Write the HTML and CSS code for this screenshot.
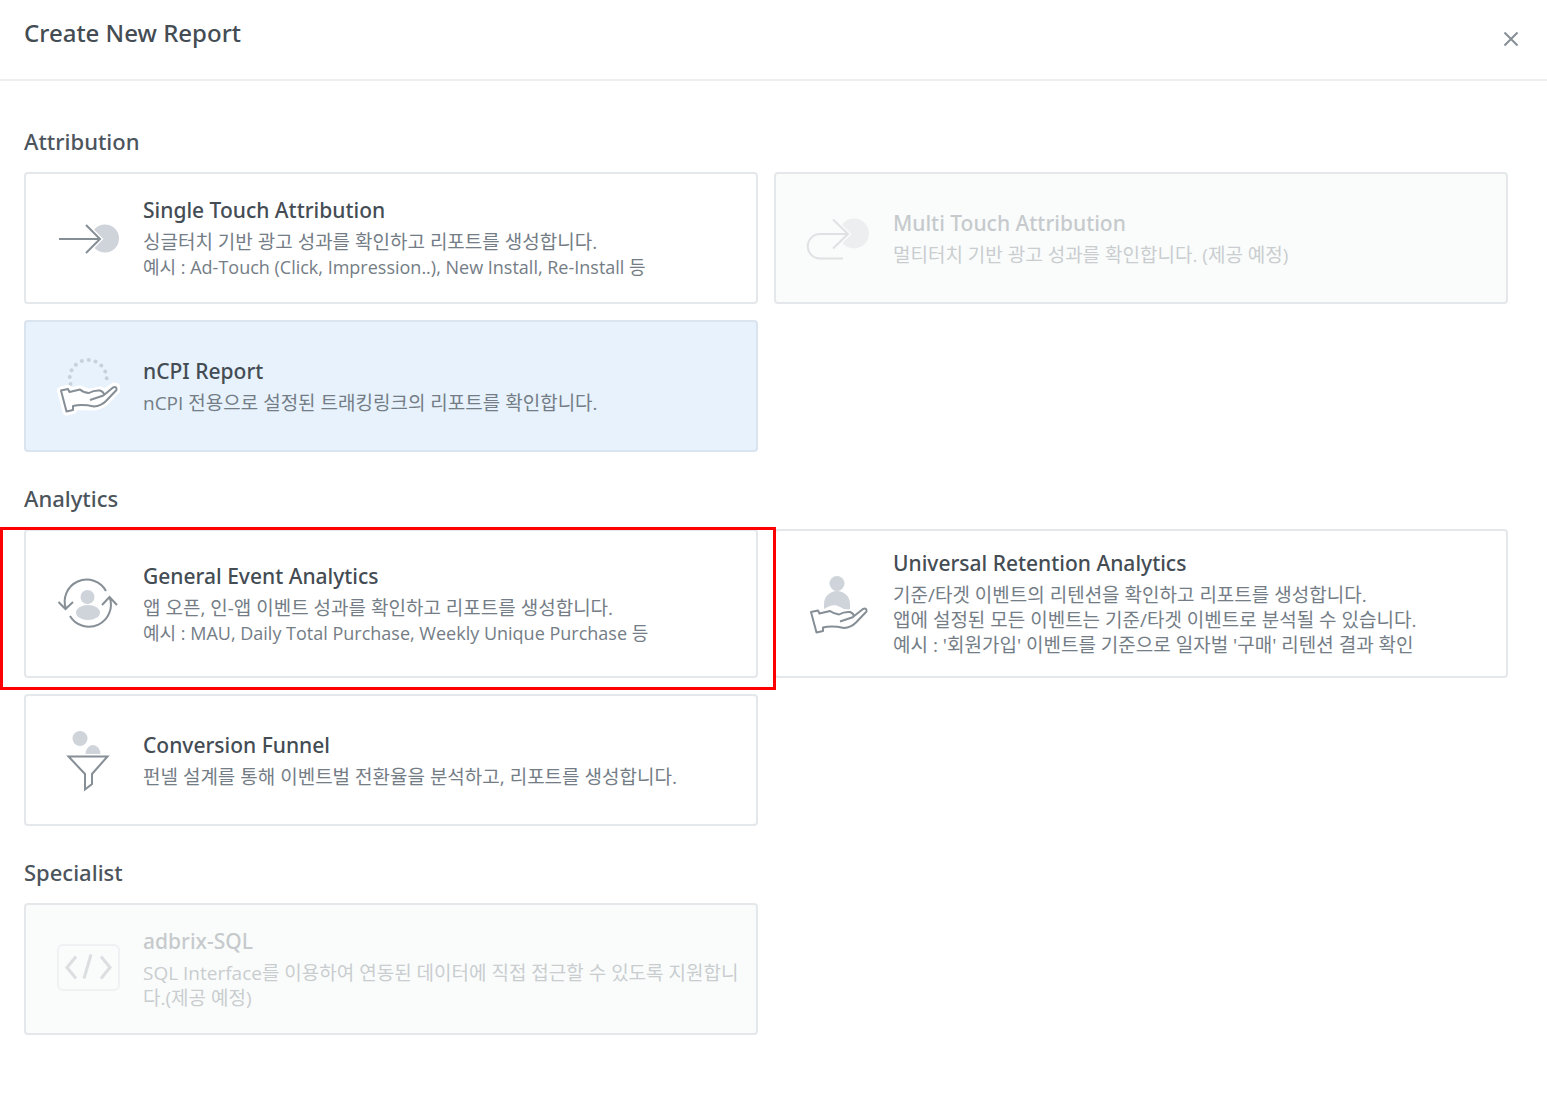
FILE: index.html
```html
<!DOCTYPE html>
<html lang="ko">
<head>
<meta charset="utf-8">
<meta name="viewport" content="width=device-width, initial-scale=1">
<title>Create New Report</title>
<link rel="stylesheet" href="styles.css">
</head>
<body>
<header class="header">
  <h1 class="header-title">Create New Report</h1>
  <button class="close" type="button" aria-label="Close">
    <svg width="16" height="16" viewBox="0 0 16 16"><path d="M1.500 1.500L14.500 14.500M14.500 1.500L1.500 14.500"/></svg>
  </button>
</header>
<main class="content">
  <section class="section">
    <h2 class="section-title">Attribution</h2>
    <div class="grid">
      <button class="card" type="button">
        <svg class="icon" viewBox="0 0 64 64"><circle class="fill" cx="49" cy="32.500" r="14"/><path class="gap" d="M32 19L46 33L32 47Z"/><path class="line" d="M3 33H43M30 19L44 33L30 47"/></svg>
        <span class="text"><span class="title">Single Touch Attribution</span><span class="desc">싱글터치 기반 광고 성과를 확인하고 리포트를 생성합니다.</span><span class="desc example">예시 : Ad-Touch (Click, Impression..), New Install, Re-Install 등</span></span>
      </button>
      <button class="card" type="button" disabled>
        <svg class="icon" viewBox="0 0 64 64"><circle class="fill" cx="48" cy="27.500" r="15"/><path class="gap" d="M29 13L44 28L29 43Z"/><path class="line" d="M41 28H14a12 12 0 0 0 0 24.500H37M27 13.500L42 28L27 42.500"/></svg>
        <span class="text"><span class="title">Multi Touch Attribution</span><span class="desc">멀티터치 기반 광고 성과를 확인합니다. (제공 예정)</span></span>
      </button>
      <button class="card selected" type="button">
        <svg class="icon" viewBox="0 0 64 64"><path class="dots" d="M14.500 30A18.500 18.500 0 1 1 49.500 31"/><path class="halo" d="M5 36.500L12 35L13.500 38L24 35.500L33 39L44 36.500L48 39L58 32.500Q61 32 60.500 35.500L50 47Q45 52 38 52.500L17 52V56L10.500 57.500Z"/><path class="hand" d="M5 36.500L12 35L13.500 38L24 35.500Q28 39 33 39Q38 36 44 36.500Q48 38 48 41L57 33.500Q61 32 60.500 36L50 47Q45 52 38 52.500Q26 50 17 52V56L10.500 57.500ZM47.500 41.500L34 46"/></svg>
        <span class="text"><span class="title">nCPI Report</span><span class="desc">nCPI 전용으로 설정된 트래킹링크의 리포트를 확인합니다.</span></span>
      </button>
    </div>
  </section>
  <section class="section">
    <h2 class="section-title">Analytics</h2>
    <div class="grid">
      <div class="cell">
        <button class="card tall" type="button">
          <svg class="icon" viewBox="0 0 64 64"><circle class="fill" cx="31.500" cy="25" r="7"/><ellipse class="fill" cx="32" cy="40.500" rx="12" ry="7.500"/><path class="line" d="M50 19A22 22 0 0 0 10 37M2.500 30L9.500 37L17 30M14 44A22 22 0 0 0 53.500 25M46 33L53.500 25L61 33"/></svg>
          <span class="text"><span class="title">General Event Analytics</span><span class="desc">앱 오픈, 인-앱 이벤트 성과를 확인하고 리포트를 생성합니다.</span><span class="desc example">예시 : MAU, Daily Total Purchase, Weekly Unique Purchase 등</span></span>
        </button>
        <span class="highlight"></span>
      </div>
      <button class="card tall" type="button">
        <svg class="icon" viewBox="0 0 64 64"><circle class="fill" cx="31" cy="11.500" r="7.500"/><path class="fill" d="M18 37V32a13 13 0 0 1 26 0V37Q38 38 33 34.500Q27 31 18 37Z"/><path class="hand" d="M5 40L12 38.500L13.500 41.500L24 39Q28 42 33 42.500Q38 39.500 44 40Q48 41.500 47.500 44.500L57 37Q61 35.500 60.500 39.500L50 50.500Q45 55.500 38 56Q26 53.500 17 55.500V59L10.500 60.500ZM47.500 45L34 49.500"/></svg>
        <span class="text"><span class="title">Universal Retention Analytics</span><span class="desc">기준/타겟 이벤트의 리텐션을 확인하고 리포트를 생성합니다.<br>앱에 설정된 모든 이벤트는 기준/타겟 이벤트로 분석될 수 있습니다.<br>예시 : '회원가입' 이벤트를 기준으로 일자벌 '구매' 리텐션 결과 확인</span></span>
      </button>
      <button class="card" type="button">
        <svg class="icon" viewBox="0 0 64 64"><circle class="fill" cx="24" cy="10.500" r="7.500"/><path class="fill" d="M29.500 26a7.500 9 0 0 1 15 0Z"/><path class="line" d="M12.500 28.500H51.500L36 46V56L29 61.500V46Z"/></svg>
        <span class="text"><span class="title">Conversion Funnel</span><span class="desc">펀넬 설계를 통해 이벤트벌 전환율을 분석하고, 리포트를 생성합니다.</span></span>
      </button>
    </div>
  </section>
  <section class="section">
    <h2 class="section-title">Specialist</h2>
    <div class="grid">
      <button class="card" type="button" disabled>
        <svg class="icon" viewBox="0 0 64 64"><rect class="frame" x="2" y="8" width="61" height="45" rx="5"/><path class="code" d="M20 19.500L11 30.500L20 41.500M35 17.500L28 41.500M45 19.500L54 30.500L45 41.500"/></svg>
        <span class="text"><span class="title">adbrix-SQL</span><span class="desc">SQL Interface를 이용하여 연동된 데이터에 직접 접근할 수 있도록 지원합니다.(제공 예정)</span></span>
      </button>
    </div>
  </section>
</main>
</body>
</html>
```
FILE: styles.css
```css
* {
  box-sizing: border-box;
}

body {
  margin: 0;
  background: #fff;
  color: #444c54;
  font-family: "Noto Sans", "Noto Sans CJK KR", sans-serif;
}

.header {
  display: flex;
  align-items: flex-start;
  justify-content: space-between;
  min-height: 81px;
  padding: 17px 24px;
  border-bottom: 2px solid #efeff0;
}

.header-title {
  margin: 0;
  font-size: 24px;
  line-height: 32px;
  font-weight: 500;
}

.close {
  display: flex;
  align-items: center;
  justify-content: center;
  width: 24px;
  height: 44px;
  padding: 0;
  border: 0;
  background: none;
}

.close svg {
  fill: none;
  stroke: #868e96;
  stroke-width: 2;
}

.content {
  display: flex;
  flex-direction: column;
  gap: 32px;
  padding: 46px 39px 56px 24px;
}

.section {
  display: flex;
  flex-direction: column;
  gap: 17px;
}

.section-title {
  margin: 0;
  color: #4c545c;
  font-size: 22px;
  line-height: 28px;
  font-weight: 500;
}

.grid {
  display: grid;
  grid-template-columns: repeat(2, minmax(0, 1fr));
  gap: 16px;
}

.cell {
  position: relative;
  display: grid;
}

.card {
  display: flex;
  align-items: center;
  gap: 23px;
  width: 100%;
  min-height: 132px;
  padding: 8px 16px 8px 30px;
  border: 2px solid #e5e8eb;
  border-radius: 4px;
  background: #fff;
  color: #444c54;
  font-family: inherit;
  text-align: left;
}

.tall {
  min-height: 149px;
}

.selected {
  background: #e7f2fc;
  border-color: #d9e4ee;
}

.card:disabled {
  background: #fafcfb;
  color: #c6cacd;
}

.text {
  display: flex;
  flex: 1;
  flex-direction: column;
  min-width: 0;
}

.title {
  margin-bottom: 6px;
  font-size: 21px;
  line-height: 28px;
  font-weight: 500;
}

.desc {
  color: #747d86;
  font-family: "Open Sans", "Noto Sans CJK KR", sans-serif;
  font-size: 19px;
  line-height: 25px;
}

.example {
  font-size: 18px;
}

.card:disabled .desc {
  color: #c9cdd0;
}

.icon {
  flex: none;
  width: 64px;
  height: 64px;
  fill: none;
  stroke-width: 2;
}

.fill {
  fill: #ced4da;
}

.line,
.hand {
  stroke: #868e96;
}

.hand {
  fill: #fff;
  stroke-linejoin: round;
}

.gap {
  fill: #fff;
  stroke: #fff;
  stroke-width: 2;
}

.halo {
  fill: #fff;
  stroke: #fff;
  stroke-width: 8;
  stroke-linejoin: round;
}

.dots {
  stroke: #c8d1d9;
  stroke-width: 4;
  stroke-linecap: round;
  stroke-dasharray: 0 7;
}

.frame {
  stroke: #eff1f2;
}

.code {
  stroke: #dcdfe1;
  stroke-width: 3;
}

.card:disabled .fill {
  fill: #eceef0;
}

.card:disabled .line {
  stroke: #dfe2e4;
}

.card:disabled .gap {
  fill: #fafcfb;
  stroke: #fafcfb;
}

.highlight {
  position: absolute;
  inset: -2px -18px -12px -24px;
  border: 3px solid #f00;
  pointer-events: none;
}
```
